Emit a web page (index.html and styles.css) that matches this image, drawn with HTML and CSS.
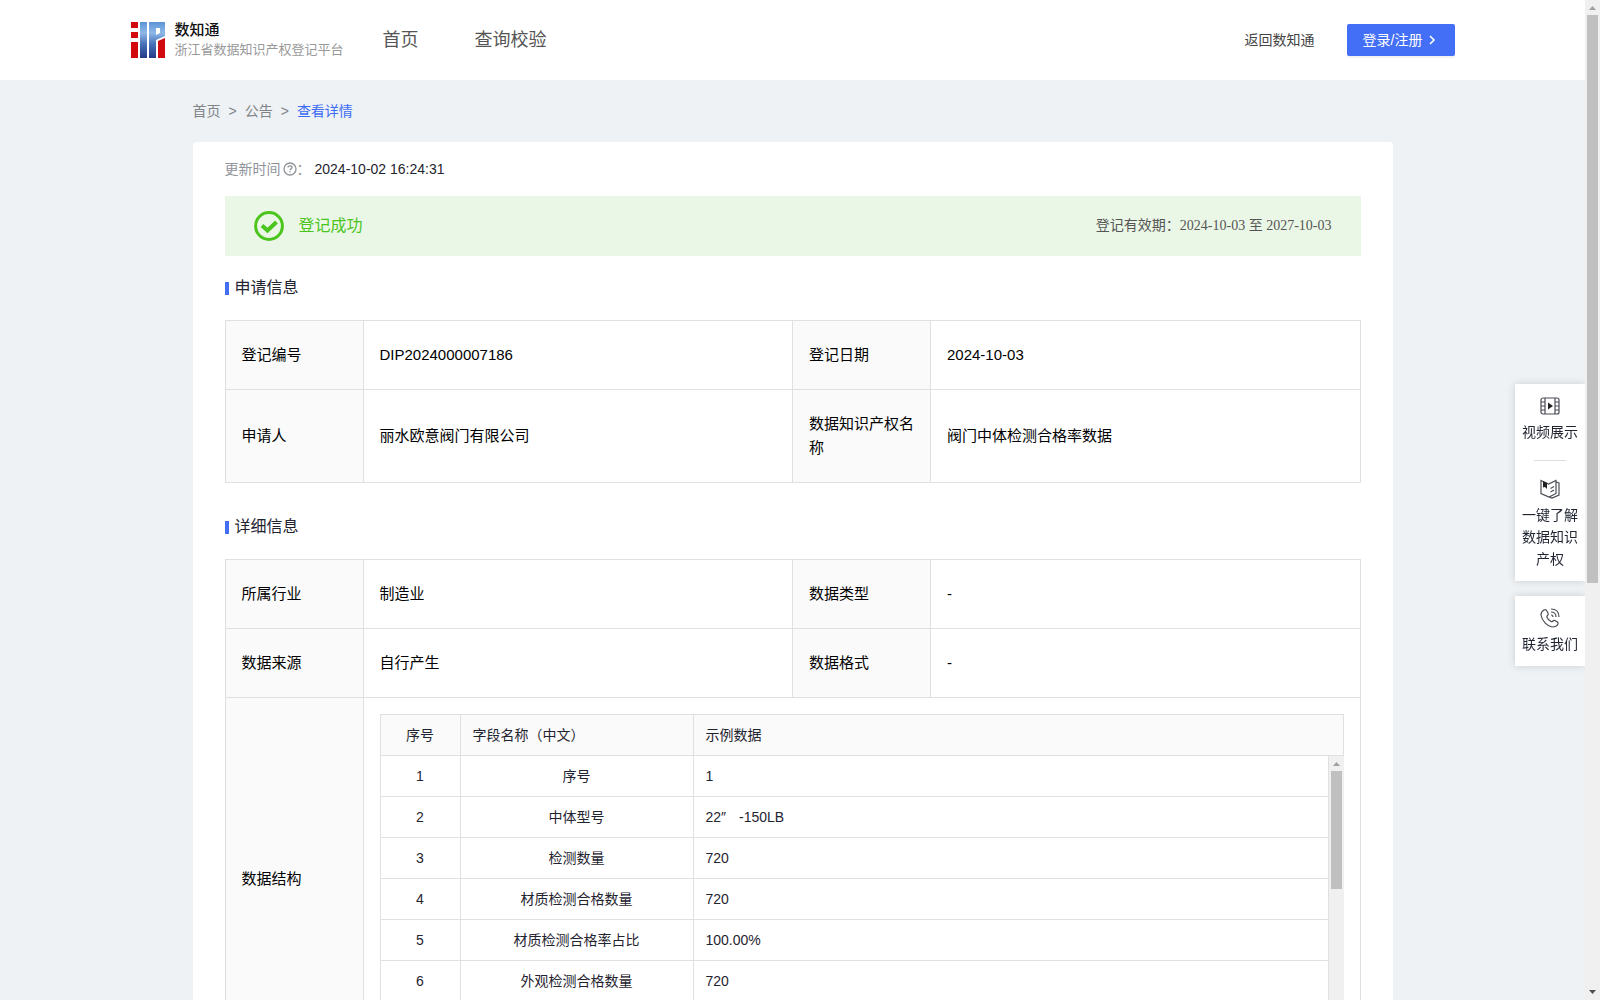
FILE: index.html
```html
<!DOCTYPE html>
<html lang="zh-CN">
<head>
<meta charset="utf-8">
<meta name="viewport" content="width=device-width, initial-scale=1">
<title>浙江省数据知识产权登记平台</title>
<link rel="stylesheet" href="styles.css">
</head>
<body>
<div class="page">
  <header class="header">
    <div class="header-inner">
      <a class="brand" href="#">
        <svg class="brand-mark" viewBox="0 0 34 36" aria-hidden="true">
          <defs>
            <linearGradient id="blue" gradientUnits="userSpaceOnUse" x1="0" y1="0" x2="0" y2="36">
              <stop offset="0" stop-color="#5b93d6"/><stop offset=".3" stop-color="#8fb8e8"/><stop offset=".6" stop-color="#4a74ba"/><stop offset="1" stop-color="#243a86"/>
            </linearGradient>
          </defs>
          <path fill="#d20a10" d="M0 0h7v6H0zM0 10h7v6H0zM0 20h7v16H0zM27 19l7-3v20h-7z"/>
          <path fill="url(#blue)" d="M9 0h7v36H9z"/>
          <path fill="url(#blue)" fill-rule="evenodd" d="M18 0h16v14l-9 4v18h-7zM25 6v7l4-2V6z"/>
        </svg>
        <span class="brand-text">
          <strong class="brand-name">数知通</strong>
          <span class="brand-sub">浙江省数据知识产权登记平台</span>
        </span>
      </a>
      <nav class="nav">
        <a href="#">首页</a>
        <a href="#">查询校验</a>
      </nav>
      <div class="actions">
        <a class="back" href="#">返回数知通</a>
        <button class="login" type="button">登录/注册
          <svg viewBox="0 0 14 14" aria-hidden="true"><path d="M5 3l4 4-4 4"/></svg>
        </button>
      </div>
    </div>
  </header>

  <div class="container">
    <nav class="crumbs" aria-label="面包屑">
      <a href="#">首页</a><span>&gt;</span><a href="#">公告</a><span>&gt;</span><a class="current" href="#">查看详情</a>
    </nav>

    <main class="card">
      <p class="updated">
        <span class="updated-label">更新时间<svg class="help" viewBox="0 0 14 14" aria-hidden="true"><circle cx="7" cy="7" r="6"/><path d="M5 5.600C5 4.400 5.900 3.800 7 3.800s2 .7 2 1.700c0 1.300-2 1.400-2 2.700"/><path d="M7 9.300v1.200"/></svg>：</span>
        <time>2024-10-02 16:24:31</time>
      </p>

      <div class="banner">
        <svg class="check" viewBox="0 0 30 30" aria-hidden="true"><circle cx="15" cy="15" r="13.400"/><path class="tick" d="M8 14.500l5.500 5 9-8.500"/></svg>
        <span class="banner-state">登记成功</span>
        <span class="banner-term">登记有效期：2024-10-03 至 2027-10-03</span>
      </div>

      <h2 class="section">申请信息</h2>
      <table class="info">
        <colgroup><col class="c-label"><col><col class="c-label"><col></colgroup>
        <tr><th scope="row">登记编号</th><td>DIP2024000007186</td><th scope="row">登记日期</th><td>2024-10-03</td></tr>
        <tr><th scope="row">申请人</th><td>丽水欧意阀门有限公司</td><th scope="row">数据知识产权名称</th><td>阀门中体检测合格率数据</td></tr>
      </table>

      <h2 class="section">详细信息</h2>
      <table class="info">
        <colgroup><col class="c-label"><col><col class="c-label"><col></colgroup>
        <tr><th scope="row">所属行业</th><td>制造业</td><th scope="row">数据类型</th><td>-</td></tr>
        <tr><th scope="row">数据来源</th><td>自行产生</td><th scope="row">数据格式</th><td>-</td></tr>
        <tr>
          <th scope="row">数据结构</th>
          <td class="nested" colspan="3">
            <div class="fields">
              <table class="grid">
                <colgroup><col class="c-no"><col class="c-name"><col></colgroup>
                <thead><tr><th scope="col">序号</th><th scope="col">字段名称（中文）</th><th scope="col">示例数据</th></tr></thead>
              </table>
              <div class="rows">
                <div class="rows-view">
                  <table class="grid">
                    <colgroup><col class="c-no"><col class="c-name"><col></colgroup>
                    <tbody>
                      <tr><td>1</td><td>序号</td><td>1</td></tr>
                      <tr><td>2</td><td>中体型号</td><td>22<span class="mark">″</span> -150LB</td></tr>
                      <tr><td>3</td><td>检测数量</td><td>720</td></tr>
                      <tr><td>4</td><td>材质检测合格数量</td><td>720</td></tr>
                      <tr><td>5</td><td>材质检测合格率占比</td><td>100.00%</td></tr>
                      <tr><td>6</td><td>外观检测合格数量</td><td>720</td></tr>
                    </tbody>
                  </table>
                </div>
                <div class="scrollbar" aria-hidden="true">
                  <svg class="arrow" viewBox="0 0 15 15"><path d="M4 10l3.500-4 3.500 4z"/></svg>
                  <div class="track"><div class="thumb" style="height: 46%"></div></div>
                  <svg class="arrow arrow-on" viewBox="0 0 15 15"><path d="M4 5l3.500 4L11 5z"/></svg>
                </div>
              </div>
            </div>
          </td>
        </tr>
      </table>
    </main>
  </div>
</div>

<div class="scrollbar" aria-hidden="true">
  <svg class="arrow" viewBox="0 0 15 15"><path d="M4 10l3.500-4 3.500 4z"/></svg>
  <div class="track"><div class="thumb" style="height: 58.600%"></div></div>
  <svg class="arrow arrow-on" viewBox="0 0 15 15"><path d="M4 5l3.500 4L11 5z"/></svg>
</div>

<aside class="side">
  <div class="side-card">
    <a href="#">
      <svg viewBox="0 0 20 20" aria-hidden="true"><rect x="1" y="2" width="18" height="16" rx="2"/><path d="M5 2v16M15 2v16M1 6h4M1 10h4M1 14h4M15 6h4M15 10h4M15 14h4"/><path class="solid" d="M8 6.500l5 3.500-5 3.500z"/></svg>
      视频展示
    </a>
    <hr>
    <a href="#">
      <svg viewBox="0 0 20 20" aria-hidden="true"><path d="M1 1.500L8.500 5 16 1.500v13L9 18l-8-3.500zM16 3l3 1v12l-7 3-3-1M10.500 9.500l3.500-2M10.500 13l3.500-2"/><path class="solid" d="M3 2l4 2v6L5 8 3 8.500z"/></svg>
      一键了解数据知识产权
    </a>
  </div>
  <div class="side-card">
    <a href="#">
      <svg viewBox="0 0 20 20" aria-hidden="true"><path d="M4 2C2 3 1 5 1 7c1 6 6 11 11 12 3 0 5-1 6-3 .5-1 0-1.500-.5-2L15 12.500c-1-.5-1.500 0-2 .5s-1 1-2 .5c-2-1-3-2-4-4-.5-1 0-1.500.5-2S8.500 6 8 5L6.500 2.500C6 1.500 5 1.500 4 2z"/><path d="M11 4c3 0 5 2 5 5M11 1c5 0 8 3 8 8M11 7c1.500 0 2 .5 2 2"/></svg>
      联系我们
    </a>
  </div>
</aside>
</body>
</html>
```
FILE: styles.css
```css
* { box-sizing: border-box; }

html, body { height: 100%; }

body {
  display: flex;
  margin: 0;
  overflow: hidden;
  background: #eef2f5;
  color: #1f2430;
  font: 14px/22px "Liberation Sans", "Noto Sans CJK SC", sans-serif;
}

a { color: inherit; text-decoration: none; }

.page { flex: 1; min-width: 0; height: 100%; overflow: hidden; }

/* Scrollbars */
.scrollbar { display: flex; flex: none; flex-direction: column; width: 15px; background: #f0f0f0; }
.track { flex: 1; padding: 0 2px; }
.thumb { background: #c0c0c0; }
.arrow { width: 15px; height: 15px; flex: none; fill: #a0a0a0; }
.arrow-on { fill: #505050; }

/* Header */
.header { background: #fff; }
.header-inner {
  display: flex;
  align-items: center;
  max-width: 1324px;
  height: 80px;
  margin: 0 auto;
}
.brand { display: flex; align-items: center; gap: 10px; width: 252px; }
.brand-mark { width: 34px; height: 36px; flex: none; }
.brand-text { display: flex; flex-direction: column; white-space: nowrap; }
.brand-name { font-size: 15px; line-height: 20px; font-weight: 500; color: #111; }
.brand-sub { font-size: 13px; line-height: 20px; color: #999; }
.nav { display: flex; gap: 56px; font-size: 18px; color: #555; }
.actions { display: flex; align-items: center; gap: 32px; margin-left: auto; color: #444; }
.login {
  display: flex;
  align-items: center;
  gap: 2px;
  height: 32px;
  padding: 0 16px;
  border: 0;
  border-radius: 2px;
  background: #436ff6;
  box-shadow: 0 2px 0 rgba(0, 0, 0, .05);
  color: #fff;
  font: inherit;
}
.login svg { width: 14px; height: 14px; fill: none; stroke: #fff; stroke-width: 1.6; }

/* Page body */
.container { max-width: 1200px; margin: 0 auto; padding-bottom: 48px; }
.crumbs { display: flex; gap: 8px; padding: 20px 0; color: #808388; }
.crumbs .current { color: #3c6cf5; }
.card { padding: 16px 32px 48px; border-radius: 4px; background: #fff; }

.updated { display: flex; gap: 4px; margin: 0 0 16px; }
.updated-label { display: flex; align-items: center; color: #909399; }
.help { width: 14px; height: 14px; margin-left: 2px; fill: none; stroke: currentColor; stroke-width: 1.3; }

.banner {
  display: flex;
  align-items: center;
  min-height: 60px;
  padding: 0 29px;
  background: #eaf7e6;
}
.check { width: 30px; height: 30px; margin-right: 15px; fill: none; stroke: #4bc51d; stroke-width: 3; }
.tick { stroke-width: 4; }
.banner-state { font-size: 16px; color: #4bc51d; }
.banner-term { margin-left: auto; color: #555; font-family: "Liberation Serif", "Noto Sans CJK SC", serif; }

.section {
  display: flex;
  align-items: center;
  gap: 6px;
  margin: 20px 0;
  font-size: 16px;
  line-height: 24px;
  font-weight: 400;
}
.section::before { content: ""; width: 4px; height: 13px; background: #436ff6; }

/* Label / value tables */
.info {
  width: 100%;
  table-layout: fixed;
  border-collapse: collapse;
  font-size: 15px;
  line-height: 24px;
  color: #000;
}
.info .c-label { width: 138px; }
.info th, .info td { padding: 22px 16px; border: 1px solid #e0e0e0; text-align: left; font-weight: 400; }
.info th { background: #fafafa; }
.info + .section { margin-top: 32px; }
.info td.nested { padding: 16px; }

/* Field list */
.fields { color: #1f2430; font-size: 14px; line-height: 22px; }
.rows { display: flex; height: 287px; }
.rows-view { flex: 1; min-width: 0; overflow: hidden; }
.grid { width: 100%; table-layout: fixed; border-collapse: separate; border-spacing: 0; border-left: 1px solid #e0e0e0; }
.grid .c-no { width: 80px; }
.grid .c-name { width: 233px; }
.info .grid th, .info .grid td { height: 41px; padding: 9px 12px; border-width: 0 1px 1px 0; }
.info .grid thead th { border-top-width: 1px; height: 42px; }
.info .grid th:first-child, .info .grid td:first-child, .info .grid td:nth-child(2) { text-align: center; }
.mark { display: inline-block; width: 14px; line-height: 16px; }

/* Floating shortcuts */
.side {
  position: fixed;
  right: 15px;
  top: 384px;
  display: flex;
  flex-direction: column;
  gap: 15px;
  width: 70px;
}
.side-card { padding: 12px 7px 11px; background: #fff; box-shadow: 0 0 8px rgba(0, 0, 0, .15); clip-path: inset(-10px 0 -10px -10px); text-align: center; }
.side-card a { display: block; }
.side-card svg { display: block; width: 20px; height: 20px; margin: 0 auto 5px; fill: none; stroke: #4a4d55; stroke-width: 1.2; }
.side-card .solid { fill: #222; stroke: none; }
.side-card hr { width: 32px; margin: 17px auto 18px; border: 0; border-top: 1px solid #ddd; }
```
